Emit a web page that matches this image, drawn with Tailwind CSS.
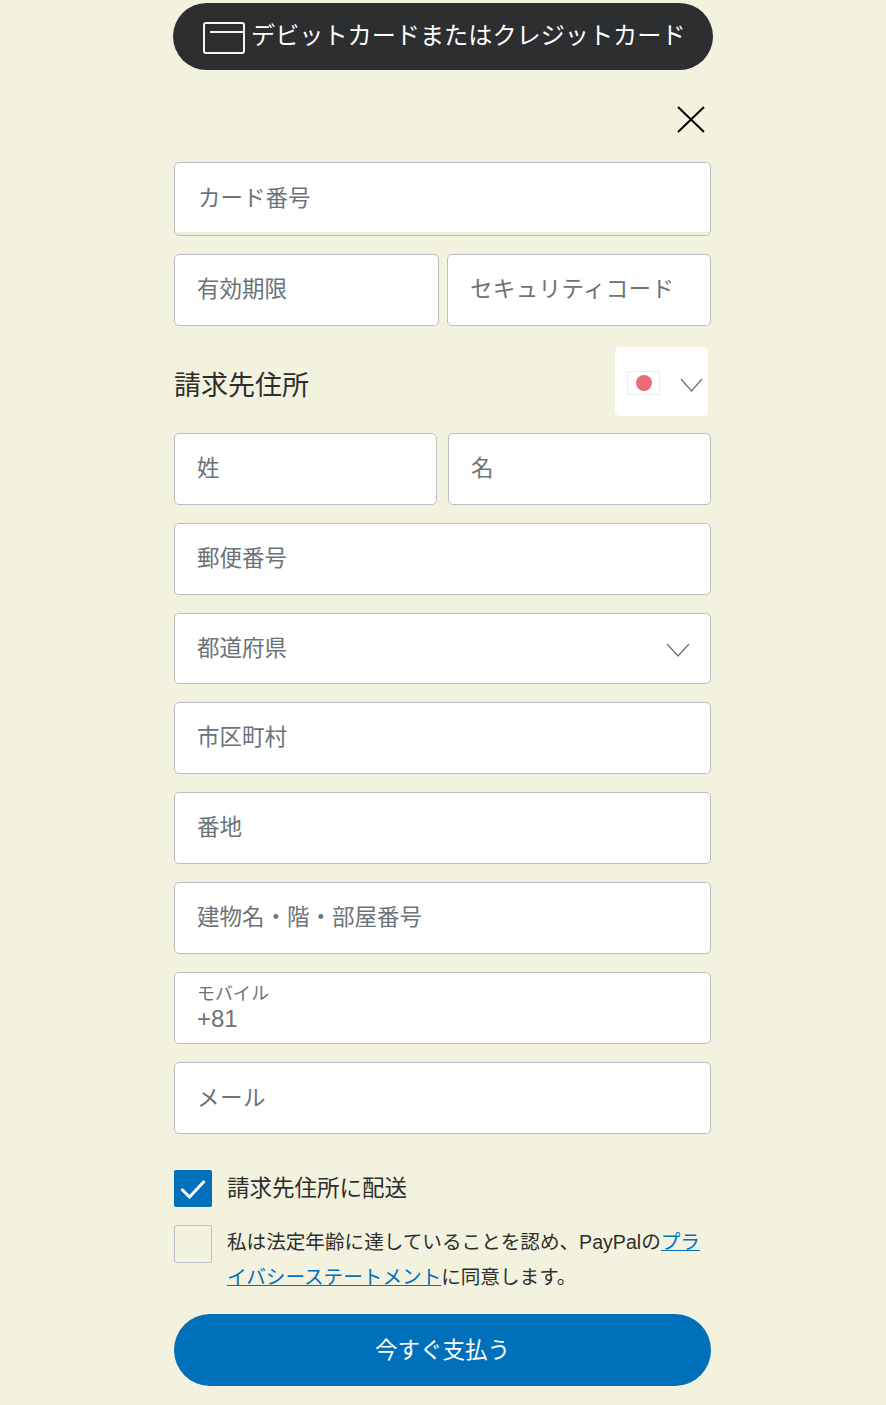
<!DOCTYPE html>
<html lang="ja">
<head>
<meta charset="utf-8">
<script src="https://cdn.jsdelivr.net/npm/@tailwindcss/browser@4"></script>
</head>
<body class="bg-[#f3f2de] font-['Liberation_Sans','Noto_Sans_CJK_JP',sans-serif] text-[#2c2e2f]">
<div class="w-[537px] h-[1405px] ml-[174px] pt-[3px]">
  <div class="h-[67px] -ml-px -mr-[2px] rounded-full bg-[#2c2e2f] flex items-center pl-[30px] gap-[6px] text-white text-[24.15px] whitespace-nowrap">
    <svg class="mt-[2px]" width="42" height="32" viewBox="0 0 42 32" fill="none" stroke="#f4f4f4" stroke-width="2"><rect x="1" y="1" width="40" height="30" rx="2"/><path d="M7 10H41"/></svg>
    <span>デビットカードまたはクレジットカード</span>
  </div>
  <div class="h-[92px] flex justify-end items-start pt-[36px] pr-[6px]">
    <svg width="28" height="27" viewBox="0 0 28 27" fill="none" stroke="#000" stroke-width="2"><path d="M1 1L27 26M27 1L1 26"/></svg>
  </div>
  <div class="h-[74px] rounded-[5px] border border-[#b9c0c4] bg-white shadow-[inset_0_-3px_0_#efefdf] flex items-center pl-[23px] text-[22.5px] text-[#6c7378]">カード番号</div>
  <div class="mt-[18px] flex gap-[8px]">
    <div class="w-[265px] h-[72px] rounded-[5px] border border-[#b9c0c4] bg-white flex items-center pl-[22px] text-[22.5px] text-[#6c7378]">有効期限</div>
    <div class="w-[264px] h-[72px] rounded-[5px] border border-[#b9c0c4] bg-white flex items-center pl-[22px] text-[22.5px] tracking-[0.35px] text-[#6c7378]">セキュリティコード</div>
  </div>
  <div class="mt-[21px] h-[69px] flex items-center justify-between pr-[3px]">
    <h2 class="text-[27px] font-normal pt-[10px]">請求先住所</h2>
    <div class="w-[93px] h-[69px] rounded-[5px] bg-white flex items-center pl-[12px] gap-[20px]">
      <div class="w-[33px] h-[24px] border border-[#ececec] bg-white flex items-center justify-center mt-[3px]"><div class="w-[16px] h-[16px] rounded-full bg-[#ea6a75] blur-[0.5px]"></div></div>
      <svg class="mt-[7px]" width="23" height="14" viewBox="0 0 23 14" fill="none" stroke="#6c7378" stroke-width="1.3"><path d="M1 1L11.5 13L22 1"/></svg>
    </div>
  </div>
  <div class="mt-[17px] flex gap-[11px]">
    <div class="w-[263px] h-[72px] rounded-[5px] border border-[#b9c0c4] bg-white flex items-center pl-[22px] text-[22.5px] text-[#6c7378]">姓</div>
    <div class="w-[263px] h-[72px] rounded-[5px] border border-[#b9c0c4] bg-white flex items-center pl-[22px] text-[22.5px] text-[#6c7378]">名</div>
  </div>
  <div class="mt-[18px] h-[72px] rounded-[5px] border border-[#b9c0c4] bg-white flex items-center pl-[22px] text-[22.5px] text-[#6c7378]">郵便番号</div>
  <div class="mt-[18px] h-[71px] rounded-[5px] border border-[#b9c0c4] bg-white flex items-center justify-between pl-[22px] pr-[20px] text-[22.5px] text-[#6c7378]">
    <span>都道府県</span>
    <svg class="mt-[2px]" width="24" height="14" viewBox="0 0 24 14" fill="none" stroke="#6c7378" stroke-width="1.3"><path d="M1 1L12 13L23 1"/></svg>
  </div>
  <div class="mt-[18px] h-[72px] rounded-[5px] border border-[#b9c0c4] bg-white flex items-center pl-[22px] text-[22.5px] text-[#6c7378]">市区町村</div>
  <div class="mt-[18px] h-[72px] rounded-[5px] border border-[#b9c0c4] bg-white flex items-center pl-[22px] text-[22.5px] text-[#6c7378]">番地</div>
  <div class="mt-[18px] h-[72px] rounded-[5px] border border-[#b9c0c4] bg-white flex items-center pl-[22px] text-[22.5px] text-[#6c7378]">建物名・階・部屋番号</div>
  <div class="mt-[18px] h-[72px] rounded-[5px] border border-[#b9c0c4] bg-white pl-[22px] pt-[10px] text-[#6c7378]">
    <div class="text-[18px] leading-[22px]">モバイル</div>
    <div class="text-[24px] leading-[27px]">+81</div>
  </div>
  <div class="mt-[18px] h-[72px] rounded-[5px] border border-[#b9c0c4] bg-white flex items-center pl-[22px] pt-[2px] text-[22.5px] tracking-[0.5px] text-[#6c7378]">メール</div>
  <div class="mt-[36px] h-[37px] flex items-center gap-[15px]">
    <div class="w-[38px] h-[37px] rounded-[2px] bg-[#0070ba] flex items-center justify-center">
      <svg width="26" height="20" viewBox="0 0 26 20" fill="none" stroke="#fff" stroke-width="3"><path d="M1.5 10L9.5 18L24.5 2"/></svg>
    </div>
    <span class="text-[22.5px] leading-[37px]">請求先住所に配送</span>
  </div>
  <div class="mt-[18px] flex items-start gap-[15px]">
    <div class="w-[38px] h-[38px] shrink-0 rounded-[2px] border border-[#b9c0c4]"></div>
    <p class="text-[19.6px] leading-[35px]">私は法定年齢に達していることを認め、PayPalの<a class="text-[#0070ba] underline" href="#">プライバシーステートメント</a>に同意します。</p>
  </div>
  <div class="mt-[19px] h-[72px] rounded-full bg-[#0070ba] flex items-center justify-center pt-[2px] text-white text-[22.5px]">今すぐ支払う</div>
</div>
</body>
</html>
